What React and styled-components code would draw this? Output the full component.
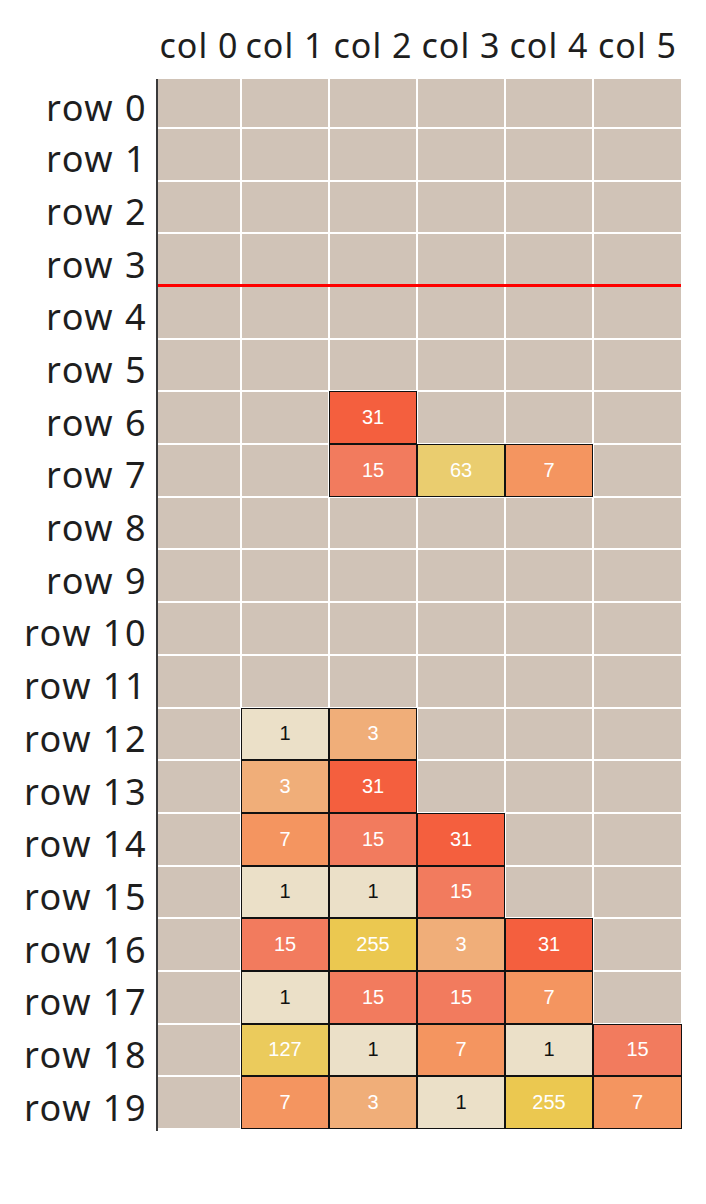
import React from "react";
import styled, { createGlobalStyle } from "styled-components";

const Global = createGlobalStyle`
  html, body { margin: 0; padding: 0; background: #ffffff; }
  body { font-family: "Noto Sans", "Lato", sans-serif; color: #222; }
`;

const COLORS = {
  1: "#ebe0c8",
  3: "#f0ae79",
  7: "#f49560",
  15: "#f27b5e",
  31: "#f45f3e",
  63: "#eacd6f",
  127: "#ebcb5c",
  255: "#ebc850",
};

const DATA = {
  6: { 2: 31 },
  7: { 2: 15, 3: 63, 4: 7 },
  12: { 1: 1, 2: 3 },
  13: { 1: 3, 2: 31 },
  14: { 1: 7, 2: 15, 3: 31 },
  15: { 1: 1, 2: 1, 3: 15 },
  16: { 1: 15, 2: 255, 3: 3, 4: 31 },
  17: { 1: 1, 2: 15, 3: 15, 4: 7 },
  18: { 1: 127, 2: 1, 3: 7, 4: 1, 5: 15 },
  19: { 1: 7, 2: 3, 3: 1, 4: 255, 5: 7 },
};

const ROWS = 20;
const COLS = 6;
const COL_TEMPLATE = "82px repeat(4, 86px) 87px";
const ROW_TEMPLATE = "48px repeat(19, 1fr)";

const Chart = styled.div`
  display: grid;
  grid-template-columns: 156px auto;
  grid-template-rows: 79px auto;
  width: 706px;
`;

const Corner = styled.div``;

const ColHeader = styled.div`
  display: grid;
  grid-template-columns: ${COL_TEMPLATE};
  column-gap: 2px;
  margin-left: 2px;
  align-items: end;
  padding-bottom: 17px;
`;

const ColLabel = styled.div`
  font-size: 34px;
  line-height: 34px;
  letter-spacing: 1px;
  text-align: center;
  white-space: nowrap;
  color: #1e1e1e;
`;

const RowLabels = styled.div`
  display: grid;
  grid-template-rows: ${ROW_TEMPLATE};
  row-gap: 2px;
  height: 1049px;
`;

const RowLabel = styled.div`
  font-size: 36px;
  line-height: 36px;
  letter-spacing: 1.5px;
  display: flex;
  align-items: center;
  justify-content: flex-end;
  padding-right: 9px;
  padding-top: 10px;
  white-space: nowrap;
  color: #1e1e1e;
`;

const PlotFrame = styled.div`
  border-left: 2px solid #3a3a3a;
  padding-bottom: 3px;
  align-self: start;
`;

const Plot = styled.div`
  position: relative;
  display: grid;
  grid-template-columns: ${COL_TEMPLATE};
  grid-template-rows: ${ROW_TEMPLATE};
  gap: 2px;
  width: 523px;
  height: 1049px;
  background: #ffffff;
`;

const Cell = styled.div`
  background: ${(p) => (p.$value ? COLORS[p.$value] : "#d0c3b7")};
  outline: ${(p) => (p.$value ? "1px solid #111" : "none")};
  display: flex;
  align-items: center;
  justify-content: center;
  font-family: "Liberation Sans", Arial, sans-serif;
  font-size: 20px;
  color: ${(p) => (p.$value === 1 ? "#111" : "#ffffff")};
`;

const RedLine = styled.div`
  position: absolute;
  left: 0;
  right: 0;
  top: 205px;
  height: 3px;
  background: #ff0000;
`;

export default function App() {
  const cells = [];
  for (let r = 0; r < ROWS; r++) {
    for (let c = 0; c < COLS; c++) {
      const v = DATA[r] && DATA[r][c];
      cells.push(
        <Cell key={`${r}-${c}`} $value={v}>
          {v || ""}
        </Cell>
      );
    }
  }
  return (
    <>
      <Global />
      <Chart>
        <Corner />
        <ColHeader>
          {Array.from({ length: COLS }, (_, i) => (
            <ColLabel key={i}>col {i}</ColLabel>
          ))}
        </ColHeader>
        <RowLabels>
          {Array.from({ length: ROWS }, (_, i) => (
            <RowLabel key={i}>row {i}</RowLabel>
          ))}
        </RowLabels>
        <PlotFrame>
          <Plot>
            {cells}
            <RedLine />
          </Plot>
        </PlotFrame>
      </Chart>
    </>
  );
}
